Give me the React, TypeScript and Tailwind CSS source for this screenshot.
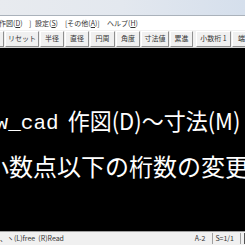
import React from "react";

const jp = { fontFamily: '"Noto Sans CJK JP", "Noto Sans", sans-serif' };
const mono = { fontFamily: '"Liberation Mono", "DejaVu Sans Mono", monospace' };

function Btn({ w, children }: { w: number; children?: React.ReactNode }) {
  return (
    <div
      style={{ width: w }}
      className="h-[16px] shrink-0 flex items-center justify-center border border-t-white border-l-white border-r-[#8f8f8f] border-b-[#8f8f8f] bg-[#f0f0f0] text-[7px] leading-none text-[#333] whitespace-nowrap overflow-hidden"
    >
      {children}
    </div>
  );
}

export default function App() {
  return (
    <div className="w-[245px] h-[245px] overflow-hidden flex flex-col bg-black" style={jp}>
      {/* title bar */}
      <div className="h-[16px] shrink-0 bg-gradient-to-r from-[#e8ebef] via-[#e3e8ef] to-[#d5dfec] border-b border-[#aab2bb]" />
      {/* menu bar */}
      <div className="h-[14px] shrink-0 bg-white flex items-center text-[7px] leading-none text-[#333] whitespace-nowrap">
        <span className="w-[30px] shrink-0 ml-[-1px]">作図(<u>D</u>)</span>
        <span className="w-[6px] shrink-0">]</span>
        <span className="w-[30px] shrink-0">設定(<u>S</u>)</span>
        <span className="w-[42px] shrink-0">[その他(<u>A</u>)]</span>
        <span className="shrink-0">ヘルプ(<u>H</u>)</span>
      </div>
      {/* toolbar */}
      <div className="h-[18px] shrink-0 bg-[#f0f0f0] flex items-center gap-[1px] border-b border-[#d4d4d4]">
        <div className="ml-[-10px]">
          <Btn w={14} />
        </div>
        <Btn w={34}>リセット</Btn>
        <Btn w={24}>半径</Btn>
        <Btn w={24}>直径</Btn>
        <Btn w={25}>円周</Btn>
        <Btn w={24}>角度</Btn>
        <Btn w={28}>寸法値</Btn>
        <Btn w={23}>累進</Btn>
        <div className="ml-[2px]">
          <Btn w={35}>小数桁 1</Btn>
        </div>
        <Btn w={26}>端部</Btn>
      </div>
      {/* canvas */}
      <div className="flex-1 bg-black text-white overflow-hidden">
        <div className="mt-[57px] flex items-baseline whitespace-nowrap leading-[28px]">
          <span className="ml-[-17px] text-[21px]" style={mono}>
            jw_cad
          </span>
          <span className="ml-[9px] text-[22px] scale-y-[1.05]">作図(D)～寸法(M)</span>
        </div>
        <div className="mt-[14px] ml-[-15px] whitespace-nowrap text-[24px] leading-[28px]">
          小数点以下の桁数の変更
        </div>
      </div>
      {/* status bar */}
      <div className="h-[14px] shrink-0 bg-[#f0f0f0] border-t border-[#a0a0a0] flex items-center text-[7px] leading-none text-[#333] whitespace-nowrap">
        <span className="w-[62px] shrink-0">、ヽ(L)free&nbsp;&nbsp;(R)Read</span>
        <span className="ml-auto">A-2</span>
        <span className="ml-[7px] h-[11px] border-l border-[#a0a0a0]" />
        <span className="ml-[2px]">S=1/1</span>
        <span className="ml-[6px] h-[11px] border-l border-[#a0a0a0]" />
        <span className="ml-[3px] h-[11px] border-l border-[#555]" />
      </div>
    </div>
  );
}
